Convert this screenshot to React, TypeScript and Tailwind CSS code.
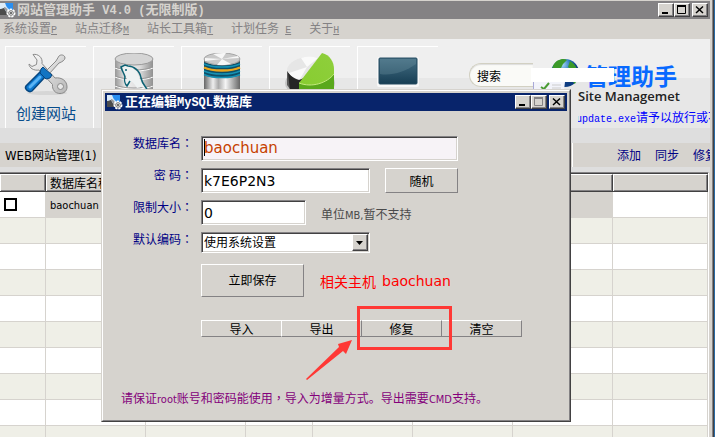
import { Fragment } from "react";
import type { ReactNode } from "react";

const SUNKEN =
  "border border-t-[#848284] border-l-[#848284] border-r-white border-b-white shadow-[inset_1px_1px_0_#424142,inset_-1px_-1px_0_#d6d3ce]";
const RAISED =
  "border border-t-white border-l-white border-r-[#848284] border-b-[#848284] bg-[#d6d3ce]";

/* Sets Latin runs and full-width marks in their own face beside the Chinese text. */
function Mixed({ text, latin }: { text: string; latin: string }) {
  const parts = text.match(/[\x20-\x7e]+|[：，]|[^\x20-\x7e：，]+/g) ?? [];
  return (
    <>
      {parts.map((part, i) => {
        if (/^[\x20-\x7e]/.test(part)) {
          return (
            <span key={i} className={latin}>
              {part}
            </span>
          );
        }
        if (/^[：，]/.test(part)) {
          return (
            <span key={i} className="font-['Noto_Sans_CJK_TC',sans-serif]">
              {part}
            </span>
          );
        }
        return <Fragment key={i}>{part}</Fragment>;
      })}
    </>
  );
}

const MONO_SMALL = "font-['Liberation_Mono',monospace] text-[10px] whitespace-pre";
const MONO_BOLD = "font-['Liberation_Mono',monospace] text-[12px] whitespace-pre";
const UI_SMALL = "font-['DejaVu_Sans_Condensed','DejaVu_Sans',sans-serif] text-[11px]";
const UI_MEDIUM = "font-['DejaVu_Sans_Condensed','DejaVu_Sans',sans-serif] text-[13px]";

function AppIcon() {
  return (
    <svg width="16" height="16" viewBox="0 0 16 16" className="shrink-0" aria-hidden="true">
      <rect x="0" y="1" width="13" height="12" fill="#c9e2f8" />
      <path d="M5 1h8v8C9 8 6 5 5 1z" fill="#2a8ff0" />
      <path d="M0 7l4-1 4 7H0z" fill="#4c4c4c" />
      <path d="M0 1h5l1 4-6 2z" fill="#dcebf7" />
      <path d="M4 6c2 0 3 2 4 6" stroke="#999" strokeWidth="2" fill="none" />
      <circle cx="11" cy="11" r="3.500" fill="#e8e8e8" stroke="#fff" strokeWidth="2" strokeDasharray="2 1" />
      <circle cx="11" cy="11" r="2.300" fill="#eee" stroke="#777" />
      <circle cx="11" cy="11" r="1" fill="#444" />
    </svg>
  );
}

function WindowButtons({ fixedSize = false }: { fixedSize?: boolean }) {
  const button =
    "flex h-3.5 w-4 items-center justify-center border border-t-white border-l-white border-r-[#424142] border-b-[#424142] bg-[#d6d3ce] shadow-[inset_-1px_-1px_0_#848284]";
  const ink = fixedSize ? "#848284" : "#000";
  return (
    <div className="ml-auto flex">
      <button type="button" aria-label="最小化" className={button}>
        <svg width="12" height="10" aria-hidden="true">
          <path d="M2 8h6" stroke="#000" strokeWidth="2" />
        </svg>
      </button>
      <button type="button" aria-label="最大化" className={button}>
        <svg width="12" height="10" aria-hidden="true">
          <path d="M1 1h9" stroke={ink} strokeWidth="2" />
          <path d="M1.500 1v7.500h8V1" stroke={ink} fill="none" />
        </svg>
      </button>
      <button type="button" aria-label="关闭" className={`ml-0.5 ${button}`}>
        <svg width="12" height="10" aria-hidden="true">
          <path d="M2 1.500l7 6.500M9 1.500l-7 6.500" stroke="#000" strokeWidth="1.500" />
        </svg>
      </button>
    </div>
  );
}

function ToolsIcon() {
  return (
    <svg width="48" height="48" viewBox="0 0 48 48" aria-hidden="true">
      <defs>
        <linearGradient id="steel" x1="0" x2="1" y1="0" y2="1">
          <stop offset="0" stopColor="#fafafa" />
          <stop offset="1" stopColor="#b8b8b8" />
        </linearGradient>
      </defs>
      <ellipse cx="25" cy="40" rx="20" ry="2" fill="#d6d6d6" />
      <path
        d="M12 1.500c5-1 10 3 9 9l13 14.500c7-1 12 3 12 9 0 4-3 6.500-7 6.500-5 0-8-4-7.500-9L18 17c-5 1-10-2-10-6l3 2.500 4.500-2 .5-4.500z"
        fill="url(#steel)"
        stroke="#8a8a8a"
        transform="translate(-1 0)"
      />
      <circle cx="38.500" cy="33.500" r="3" fill="#e8e8e8" stroke="#8a8a8a" />
      <path
        d="M37 3c2-2 6-1 6 2 0 2-3 4-6 5L27 21l-3-3L34 8z"
        fill="url(#steel)"
        stroke="#8a8a8a"
      />
      <path d="M18 19l5 5L10 38c-3 2-8-2-6-5z" fill="#0c78cf" stroke="#07467f" strokeWidth="1.500" />
      <path d="M8 34l10-10" stroke="#5ab4f5" strokeWidth="3" strokeLinecap="round" />
      <path d="M19 16l2-2 9 8-2 3-4 1-6-6z" fill="#1274c2" stroke="#07467f" />
    </svg>
  );
}

function DolphinIcon() {
  return (
    <svg width="42" height="48" viewBox="0 0 42 48" aria-hidden="true">
      <defs>
        <linearGradient id="drum" x1="0" x2="1">
          <stop offset="0" stopColor="#989898" />
          <stop offset=".3" stopColor="#eee" />
          <stop offset=".65" stopColor="#ddd" />
          <stop offset="1" stopColor="#909090" />
        </linearGradient>
      </defs>
      <path d="M2 6v42h38V6z" fill="url(#drum)" />
      <ellipse cx="21" cy="6" rx="19" ry="6" fill="#d5d5d5" stroke="#999" />
      <path d="M2 15c9 4 29 4 38 0M2 24c9 4 29 4 38 0M2 33c9 4 29 4 38 0" stroke="#fafafa" fill="none" />
      <path d="M2 14c9 4 29 4 38 0M2 23c9 4 29 4 38 0M2 32c9 4 29 4 38 0" stroke="#999" fill="none" />
      <path
        d="M9 13c4-2 9 0 12 3 5 4 5 10 8 14l5 6-6-2-4 1c-2-3-3-5-6-7l-2 5c-3-3-3-6-2-9-3-4-4-7-5-11z"
        fill="#eef2f2"
      />
      <path
        d="M34 36c-3-4-5-6-6-11-1-7-7-12-13-12l-3-1-4 2c1 4 3 6 4 10-1 3 0 7 2 9l3-5"
        fill="none"
        stroke="#0d6274"
        strokeWidth="1.500"
      />
      <circle cx="13" cy="17" r="1" fill="#0d6274" />
    </svg>
  );
}

function StackIcon() {
  return (
    <svg width="38" height="48" viewBox="0 0 38 48" aria-hidden="true">
      <defs>
        <linearGradient id="metal" x1="0" x2="1">
          <stop offset="0" stopColor="#666" />
          <stop offset=".25" stopColor="#eee" />
          <stop offset=".4" stopColor="#aaa" />
          <stop offset=".6" stopColor="#f5f5f5" />
          <stop offset="1" stopColor="#666" />
        </linearGradient>
      </defs>
      <path d="M1 6v42h36V6z" fill="url(#metal)" />
      <path d="M1 9c8 4 28 4 36 0v13c-8 4-28 4-36 0z" fill="#0d4f68" />
      <path d="M1 11c8 4 28 4 36 0M1 18c8 4 28 4 36 0M1 21.500c8 4 28 4 36 0" stroke="#1592b5" strokeWidth="1.500" fill="none" />
      <path d="M1 14.500c8 4 28 4 36 0" stroke="#eba51c" strokeWidth="2.500" fill="none" />
      <ellipse cx="19" cy="6" rx="18" ry="6" fill="#c9c9c9" stroke="#a5a5a5" />
      <path d="M19 6L10 1c5-1 10-1 13-1zM19 6l-5 6c6 0 10 0 14-1zM19 6L2 8V5zM19 6l16-3 1 2z" fill="#f7f7f7" />
    </svg>
  );
}

function PieIcon() {
  return (
    <svg width="50" height="48" viewBox="0 0 50 48" aria-hidden="true">
      <defs>
        <linearGradient id="leaf" x1="0" x2="1" y1="1" y2="0">
          <stop offset="0" stopColor="#86cc2e" />
          <stop offset="1" stopColor="#8fcf3c" />
        </linearGradient>
      </defs>
      <ellipse cx="25" cy="30" rx="25" ry="14" fill="#c4c4c4" />
      <path d="M2 18v14l12 16V30z" fill="#5a5a5a" />
      <path d="M3 20l11 4 8-3-8 10v15L5 38z" fill="#262626" />
      <path d="M2 16C4 9 13 4 23 4c4 0 7 0 10 1L19 25l-5 2C8 25 3 21 2 16z" fill="#e6e6e6" />
      <path d="M22 14L16 5c6-2 12-1 17 0zM22 14L4 20c3 4 7 6 11 6z" fill="#fafafa" />
      <path d="M37 0c8 2 12 9 12 16v28H14V30z" fill="url(#leaf)" />
      <path d="M14 30c13 5 28 0 35-9v27H14z" fill="#5aa81c" />
      <path d="M14 30c13 5 28 0 35-9" stroke="#c3ea7d" fill="none" />
    </svg>
  );
}

function ScreenIcon() {
  return (
    <svg width="42" height="32" viewBox="0 0 42 32" aria-hidden="true">
      <defs>
        <linearGradient id="glass" x1="0" x2="0" y1="0" y2="1">
          <stop offset="0" stopColor="#456f84" />
          <stop offset="1" stopColor="#173e54" />
        </linearGradient>
      </defs>
      <rect x="0" y="0" width="42" height="30" rx="2" fill="#f8f8f8" />
      <rect x="2" y="1" width="38" height="26" rx="1" fill="url(#glass)" stroke="#244b61" />
      <path d="M3 17C14 19 28 15 39 7V2H3z" fill="#7497a7" opacity=".3" />
    </svg>
  );
}

function GlobeIcon() {
  return (
    <svg width="46" height="32" viewBox="0 0 46 32" aria-hidden="true">
      <defs>
        <radialGradient id="sea" cx=".4" cy=".2">
          <stop offset="0" stopColor="#a8daf6" />
          <stop offset=".6" stopColor="#2775bc" />
          <stop offset="1" stopColor="#0d3c81" />
        </radialGradient>
      </defs>
      <circle cx="32" cy="15" r="14" fill="url(#sea)" />
      <path d="M20 8c3-7 11-8 14-6l-4 4-2 4-5 3-4-1zM37 3c5 3 8 8 8 13l-3 10-5-5 3-8-5-4z" fill="#3c9a29" />
      <path d="M0 24h32l-1 8H0z" fill="#f2f3fa" />
      <path d="M0.500 23v9" stroke="#a9a9d8" />
      <path d="M8 29l3 2 5-6" stroke="#4b9c35" strokeWidth="2" fill="none" />
      <path d="M19 27h9M19 30h9" stroke="#ccc" />
    </svg>
  );
}

function ToolTile({ icon, name, showName = false }: { icon: ReactNode; name: string; showName?: boolean }) {
  return (
    <button
      type="button"
      aria-label={name}
      className="flex h-[82px] w-[81px] shrink-0 flex-col items-center border-t border-l border-white pt-1.5 text-[15px] leading-5 text-[#084d8c]"
    >
      <span className="flex h-[50px] items-start">{icon}</span>
      {showName && name}
    </button>
  );
}

const MENUS = [
  { text: "系统设置", key: "P" },
  { text: "站点迁移", key: "M" },
  { text: "站长工具箱", key: "T" },
  { text: "计划任务 ", key: "E" },
  { text: "关于", key: "H" },
];

function MainWindow() {
  const filler = Array.from({ length: 9 }, (_, i) => i);
  const columns = Array.from({ length: 7 }, (_, i) => i);
  const headCell =
    "h-[18px] overflow-hidden border-t border-r border-b border-t-white border-r-[#424142] border-b-[#424142] bg-[#d6d3ce] p-0 pl-1 text-left align-middle font-normal whitespace-nowrap shadow-[inset_1px_0_0_#fff,inset_-1px_-1px_0_#848284]";
  return (
    <div className="min-h-screen bg-[#296aa5] pr-px">
      <div className="min-h-screen border-r border-[#424142] bg-[#d6d3ce]">
        <div className="min-h-screen border-r border-[#848284] pt-px pr-0.5">
          <header className="flex h-[18px] items-center bg-[#848284] pr-0.5 text-[13px] leading-[18px] font-bold text-[#d6d3ce]">
            <AppIcon />
            <h1 className="ml-px whitespace-nowrap">
              <Mixed text="网站管理助手 V4.0 (无限制版)" latin={MONO_BOLD} />
            </h1>
            <WindowButtons />
          </header>
          <nav className="flex h-5 items-center gap-[18px] pl-[3px] text-[#848284]">
            {MENUS.map((menu) => (
              <a key={menu.key} href="#" className="whitespace-nowrap">
                <Mixed text={menu.text} latin={MONO_SMALL} />
                <span className={`${MONO_SMALL} underline`}>{menu.key}</span>
              </a>
            ))}
          </nav>

          <section className="flex h-[89px] gap-[7px] overflow-hidden bg-[linear-gradient(#efefef_39px,#e7e7e7_39px)] pt-[7px] pl-[5px]">
            <ToolTile icon={<ToolsIcon />} name="创建网站" showName />
            <ToolTile icon={<DolphinIcon />} name="MySQL" />
            <ToolTile icon={<StackIcon />} name="SQL" />
            <ToolTile icon={<PieIcon />} name="磁盘" />
            <ToolTile icon={<span className="mt-1"><ScreenIcon /></span>} name="桌面" />
            <div className="relative ml-[24px] h-10 w-[102px] shrink-0 pt-[17px]">
              <input
                aria-label="搜索"
                defaultValue="搜索"
                className="h-6 w-16 rounded-l-full border border-r-0 border-[#d2d0c2] bg-[#fafaf7] pl-[7px] text-[12px] text-black shadow-[inset_0_1px_1px_#ddd] outline-none"
              />
              <span className="absolute top-3 left-16">
                <GlobeIcon />
              </span>
              <span className="absolute top-[22px] left-[62px] z-10 h-3.5 w-[83px] bg-white" />
            </div>
            <div className="min-w-0 flex-1 overflow-hidden pt-[17px]">
              <div className="pl-[7px] text-[23px] leading-6 font-bold whitespace-nowrap text-[#0869ff]">管理助手</div>
              <div className="font-['Open_Sans',sans-serif] text-[13px] leading-[18px] font-semibold whitespace-nowrap text-[#222]">
                Site Managemet
              </div>
              <p className="-ml-[14px] pt-1 text-[12px] leading-4 whitespace-nowrap text-[#0000ff]">
                <Mixed text="除update.exe请予以放行或不" latin={MONO_SMALL} />
              </p>
            </div>
          </section>

          <div className="h-[15px] bg-[#dedede]" />
          <div className="flex h-6 items-center overflow-hidden pl-[5px]">
            <h2 className="w-[567px] shrink-0 leading-4">
              <Mixed text="WEB网站管理(1)" latin={UI_MEDIUM} />
            </h2>
            <div className="flex h-full items-center gap-3.5 border-l border-white pl-[44px] whitespace-nowrap text-[#000084]">
              <a href="#">添加</a>
              <a href="#">同步</a>
              <a href="#">修复</a>
            </div>
          </div>
          <div className="h-[5px] bg-[#dedede]" />

          <div className="mr-px border-t border-r border-t-[#848284] border-r-white">
            <table className="w-full table-fixed border-separate border-spacing-0 border-t border-[#424142]">
              <colgroup>
                <col className="w-[46px]" />
                <col className="w-[100px]" />
                <col className="w-[100px]" />
                <col className="w-[67px]" />
                <col className="w-[100px]" />
                <col className="w-[100px]" />
                <col className="w-[100px]" />
                <col />
              </colgroup>
              <thead>
                <tr>
                  <th className={headCell} />
                  <th className={headCell}>
                    <div className="h-4 leading-4">数据库名称</div>
                  </th>
                  <th className={headCell} />
                  <th className={headCell} />
                  <th className={headCell} />
                  <th className={headCell} />
                  <th className={headCell} />
                  <th className={headCell} />
                </tr>
              </thead>
              <tbody>
                <tr className="bg-white">
                  <td className="h-[26px] border-r border-b border-[#d6d3ce] p-0 pl-1">
                    <input
                      type="checkbox"
                      aria-label="选择 baochuan"
                      className="block h-[13px] w-[13px] appearance-none border-2 border-black bg-white"
                    />
                  </td>
                  <td className="border-r border-b border-[#d6d3ce] bg-[#d6d3ce] p-0 pl-1">
                    <span className={UI_SMALL}>baochuan</span>
                  </td>
                  <td colSpan={5} className="border-r border-b border-[#d6d3ce] bg-[#d6d3ce] p-0" />
                  <td className="border-r border-b border-[#d6d3ce] p-0" />
                </tr>
                {filler.map((row) => (
                  <tr key={row} className="odd:bg-white even:bg-[#efefe7]">
                    {columns.map((column) => (
                      <td key={column} className="h-[26px] border-r border-b border-[#d6d3ce] p-0" />
                    ))}
                    <td className="border-r border-b border-[#d6d3ce] p-0" />
                  </tr>
                ))}
              </tbody>
            </table>
          </div>
        </div>
      </div>
    </div>
  );
}

function FieldLabel({ id, text }: { id: string; text: string }) {
  return (
    <label htmlFor={id} className="text-right leading-3.5 whitespace-nowrap text-[#000084]">
      <Mixed text={text} latin={UI_SMALL} />
    </label>
  );
}

function DatabaseDialog() {
  const field = "h-[25px] bg-white px-0.5 font-['DejaVu_Sans',sans-serif] text-[14px] text-black outline-none";
  return (
    <div
      role="dialog"
      aria-labelledby="dialog-title"
      className="absolute top-[89px] left-[101px] w-[470px] border border-t-[#d6d3ce] border-r-[#424142] border-b-[#424142] border-l-[#d6d3ce] bg-[#d6d3ce]"
    >
      <div className="border border-t-white border-r-[#848284] border-b-[#848284] border-l-white p-0.5">
        <header className="flex h-[18px] items-center bg-[#08246b] pr-0.5 pl-0.5 text-[13px] leading-[18px] font-bold text-white">
          <AppIcon />
          <h2 id="dialog-title" className="ml-0.5 whitespace-nowrap">
            <Mixed text="正在编辑MySQL数据库" latin={MONO_BOLD} />
          </h2>
          <WindowButtons fixedSize />
        </header>
        <form className="pt-[25px]" onSubmit={(event) => event.preventDefault()}>
          <div className="grid auto-rows-[24px] grid-cols-[88px_1fr] gap-2">
            <FieldLabel id="db-name" text="数据库名：" />
            <div className="relative">
              <input
                id="db-name"
                defaultValue="baochuan"
                className={`block h-[25px] w-[257px] bg-[#f7f3f7] px-0.5 pb-0.5 font-['DejaVu_Sans',sans-serif] text-[15px] font-medium text-[#c64100] outline-none ${SUNKEN}`}
              />
              <span className="absolute top-[3px] left-[3px] h-[17px] w-px bg-black" />
            </div>
            <FieldLabel id="db-pass" text="密 码：" />
            <div className="flex gap-[15px]">
              <input id="db-pass" defaultValue="k7E6P2N3" className={`w-[169px] ${field} ${SUNKEN}`} />
              <button type="button" className={`h-[25px] w-[73px] ${RAISED}`}>
                随机
              </button>
            </div>
            <FieldLabel id="db-size" text="限制大小：" />
            <div className="flex gap-[15px]">
              <input id="db-size" defaultValue="0" className={`w-[105px] ${field} ${SUNKEN}`} />
              <span className="pt-1.5 leading-4 whitespace-nowrap text-[#4a4a4a]">
                <Mixed text="单位MB,暂不支持" latin={UI_SMALL} />
              </span>
            </div>
            <FieldLabel id="db-charset" text="默认编码：" />
            <div className="relative h-[21px] w-[169px]">
              <select
                id="db-charset"
                className={`block h-full w-full appearance-none bg-white px-0.5 pb-0.5 text-[12px] text-black outline-none ${SUNKEN}`}
              >
                <option>使用系统设置</option>
              </select>
              <span className="pointer-events-none absolute top-0.5 right-0.5 flex h-[17px] w-4 items-center justify-center border border-t-white border-l-white border-r-[#424142] border-b-[#424142] bg-[#d6d3ce] shadow-[inset_-1px_-1px_0_#848284]">
                <svg width="8" height="4" aria-hidden="true">
                  <path d="M0 0h7L3.500 4z" fill="#000" />
                </svg>
              </span>
            </div>
          </div>
          <div className="mt-2 flex items-center gap-4 pl-24">
            <button type="submit" className={`h-[33px] w-[103px] pb-0.5 ${RAISED}`}>
              立即保存
            </button>
            <p className="flex gap-1.5 text-[14px] leading-5 whitespace-nowrap text-[#ff0000]">
              相关主机 <span className="font-['DejaVu_Sans',sans-serif]">baochuan</span>
            </p>
          </div>
          <div className="mt-[23px] flex h-[17px] pl-24 text-[12px]">
            <button type="button" className="w-20 border-t border-b border-l border-white border-b-[#848284] leading-3.5">
              导入
            </button>
            <button type="button" className="w-20 border-t border-b border-l border-white border-b-[#848284] leading-3.5">
              导出
            </button>
            <button type="button" className="w-[81px] border border-[#848284] border-t-white leading-3.5">
              修复
            </button>
            <button type="button" className="w-20 border-t border-r border-b border-[#848284] border-t-white leading-3.5">
              清空
            </button>
          </div>
          <p className="mt-[53px] pb-2.5 pl-4 leading-4 whitespace-nowrap text-[#84007b]">
            <Mixed text="请保证root账号和密码能使用，导入为增量方式。导出需要CMD支持。" latin={UI_SMALL} />
          </p>
        </form>
      </div>
    </div>
  );
}

function Highlight() {
  return (
    <>
      <div className="pointer-events-none absolute top-[306px] left-[357px] h-11 w-[95px] border-3 border-[#ff3835]" />
      <svg
        className="pointer-events-none absolute top-[338px] left-[304px]"
        width="50"
        height="44"
        viewBox="0 0 50 44"
        aria-hidden="true"
      >
        <path d="M2 41L35 9l-1-3L48 2l-6 14-3-3L3 42z" fill="#ff3835" />
      </svg>
    </>
  );
}

export default function App() {
  return (
    <main className="relative h-screen overflow-hidden font-['Noto_Sans_CJK_SC',sans-serif] text-[12px] leading-4 text-black">
      <MainWindow />
      <DatabaseDialog />
      <Highlight />
    </main>
  );
}
